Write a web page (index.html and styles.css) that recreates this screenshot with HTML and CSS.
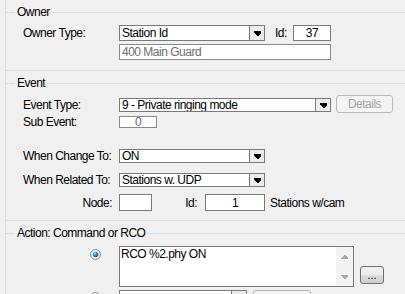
FILE: index.html
```html
<!DOCTYPE html>
<html>
<head>
<meta charset="utf-8">
<link rel="stylesheet" href="styles.css">
</head>
<body>
<div class="panel">
  <fieldset class="grp grp-owner">
    <legend>Owner</legend>
    <div class="row r-o1">
      <span class="lbl">Owner Type:</span>
      <div class="combo w146 h16"><span class="val">Station Id</span><span class="dd"><svg width="7" height="5" viewBox="0 0 7 5"><path d="M0 0h7v2l-3 3h-1l-3-3z"/></svg></span></div>
      <span class="idlbl">Id:</span>
      <div class="input w38 h16 center">37</div>
    </div>
    <div class="row r-o2">
      <span class="lbl"></span>
      <div class="input dis w212 h16">400 Main Guard</div>
    </div>
  </fieldset>

  <fieldset class="grp grp-event">
    <legend>Event</legend>
    <div class="row r-e1">
      <span class="lbl">Event Type:</span>
      <div class="combo w212 h14 top3"><span class="val">9 - Private ringing mode</span><span class="dd"><svg width="7" height="5" viewBox="0 0 7 5"><path d="M0 0h7v2l-3 3h-1l-3-3z"/></svg></span></div>
      <div class="btn dis-btn">Details</div>
    </div>
    <div class="row r-e2">
      <span class="lbl">Sub Event:</span>
      <div class="input dis w38 h12 center">0</div>
    </div>
    <div class="row r-e3">
      <span class="lbl">When Change To:</span>
      <div class="combo w146 h14"><span class="val">ON</span><span class="dd"><svg width="7" height="5" viewBox="0 0 7 5"><path d="M0 0h7v2l-3 3h-1l-3-3z"/></svg></span></div>
    </div>
    <div class="row r-e4">
      <span class="lbl">When Related To:</span>
      <div class="combo w146 h14"><span class="val">Stations w. UDP</span><span class="dd"><svg width="7" height="5" viewBox="0 0 7 5"><path d="M0 0h7v2l-3 3h-1l-3-3z"/></svg></span></div>
    </div>
    <div class="row r-e5">
      <span class="lbl right">Node:</span>
      <div class="input w33 h17"></div>
      <span class="idlbl2">Id:</span>
      <div class="input w60 h17 center">1</div>
      <span class="note">Stations w/cam</span>
    </div>
  </fieldset>

  <fieldset class="grp grp-action">
    <legend>Action: Command or RCO</legend>
    <div class="row r-a1">
      <span class="lbl radio-cell">
        <svg class="radio" width="11" height="11" viewBox="0 0 11 11">
          <defs>
            <radialGradient id="rg" cx="40%" cy="35%" r="70%">
              <stop offset="0" stop-color="#9fe0ff"/>
              <stop offset="0.5" stop-color="#1f8ad6"/>
              <stop offset="1" stop-color="#0b4f8a"/>
            </radialGradient>
          </defs>
          <circle cx="5.5" cy="5.5" r="5" fill="#e4e4e4" stroke="#8f8f8f" stroke-width="1"/>
          <circle cx="5.5" cy="5.5" r="3.7" fill="#f7f7f7"/>
          <circle cx="5.5" cy="5.5" r="2.8" fill="url(#rg)"/>
        </svg>
      </span>
      <div class="memo">
        <div class="memo-text">RCO %2.phy ON</div>
        <div class="vscroll">
          <svg width="7" height="4" viewBox="0 0 7 4"><path d="M3 0h1l3 3v1h-7v-1z" fill="#a8a8a8"/></svg>
          <svg width="7" height="4" viewBox="0 0 7 4"><path d="M0 0h7v1l-3 3h-1l-3-3z" fill="#a8a8a8"/></svg>
        </div>
      </div>
      <div class="btn small-btn">...</div>
    </div>
    <div class="row r-a2">
      <span class="lbl radio-cell">
        <svg class="radio" width="11" height="11" viewBox="0 0 11 11">
          <circle cx="5.5" cy="5.5" r="5" fill="#ececec" stroke="#9a9a9a" stroke-width="1"/>
        </svg>
      </span>
      <div class="combo w128 h16"><span class="val"></span><span class="dd"></span></div>
      <div class="btn plain-btn"></div>
    </div>
  </fieldset>
</div>
</body>
</html>
```

FILE: styles.css
```css
* { box-sizing: border-box; }
html, body {
  margin: 0;
  padding: 0;
  background: #f0f0f0;
  width: 405px;
  height: 294px;
  overflow: hidden;
}
body {
  font-family: "Liberation Sans", Arial, sans-serif;
  font-size: 12px;
  letter-spacing: -0.5px;
  color: #000;
  line-height: 14px;
}
.panel {
  margin-left: 5px;
  border-left: 1px solid #d9e1e6;
  height: 294px;
  overflow: hidden;
}
.grp {
  margin: 0;
  padding: 0 0 0 17px;
  border: 1px solid #d5dfe5;
  border-left: none;
  border-right: none;
  min-width: 0;
}
.grp legend {
  margin-left: -8px;
  padding: 0 2px;
  line-height: 14px;
  height: 14px;
}
.grp-owner { margin-top: 5px; padding-bottom: 10px; }
.grp-event { margin-top: 5px; padding-bottom: 9px; }
.grp-action { margin-top: 5px; padding-bottom: 0; border-bottom: none; }

.row { display: flex; align-items: center; }
.lbl { width: 96px; flex: none; white-space: nowrap; }
.lbl.right { text-align: right; padding-right: 7px; }

.r-o1 { margin-top: 6px; height: 16px; }
.r-o2 { margin-top: 3px; height: 16px; }
.r-e1 { margin-top: 5px; height: 18px; align-items: flex-start; }
.r-e1 .lbl { margin-top: 3px; }
.r-e2 { margin-top: 2px; height: 14px; }
.r-e3 { margin-top: 20px; height: 14px; }
.r-e4 { margin-top: 10px; height: 14px; }
.r-e5 { margin-top: 7px; height: 17px; }
.r-a1 { margin-top: 6px; height: 41px; align-items: flex-start; }
.r-a2 { margin-top: 3px; height: 20px; align-items: flex-start; }

.combo, .input {
  border: 1px solid #7a7a7a;
  background: #fff;
  display: flex;
  align-items: center;
  flex: none;
  overflow: hidden;
  white-space: nowrap;
}
.combo .val { flex: 1; padding-left: 2px; }
.combo .dd {
  width: 15px;
  align-self: stretch;
  border-left: 1px solid #7a7a7a;
  background: #ececec;
  display: flex;
  align-items: center;
  justify-content: center;
}
.combo .dd svg { shape-rendering: crispEdges; fill: #000; }
.input { padding-left: 2px; }
.input.center { justify-content: center; padding-left: 0; }
.input.dis { color: #6d6d6d; border-color: #8a8a8a; }

.w33 { width: 33px; }
.w38 { width: 38px; }
.w60 { width: 60px; }
.w128 { width: 128px; }
.w146 { width: 146px; }
.w212 { width: 212px; }
.h12 { height: 12px; }
.h14 { height: 14px; }
.h16 { height: 16px; }
.h17 { height: 17px; }
.top3 { margin-top: 3px; }

.idlbl { width: 28px; padding-left: 10px; flex: none; }
.idlbl2 { width: 53px; text-align: right; padding-right: 8px; flex: none; }
.note { margin-left: 5px; white-space: nowrap; }

.btn {
  flex: none;
  display: flex;
  align-items: center;
  justify-content: center;
  border-radius: 3px;
}
.dis-btn {
  margin-left: 5px;
  width: 57px;
  height: 18px;
  border: 1px solid #b5b9bc;
  background: #f4f4f4;
  color: #a3a3a3;
}
.small-btn {
  margin-left: 6px;
  margin-top: 20px;
  width: 24px;
  height: 18px;
  border: 1px solid #707070;
  background: linear-gradient(#f2f2f2 0%, #ebebeb 50%, #dddddd 51%, #cfcfcf 100%);
  align-items: flex-end;
  line-height: 12px;
  padding-bottom: 2px;
  font-size: 11px;
  letter-spacing: 0;
}
.plain-btn {
  margin-left: 6px;
  width: 58px;
  height: 20px;
  border: 1px solid #adb2b5;
  background: #f4f4f4;
}

.radio-cell { display: flex; justify-content: flex-start; }
.radio { margin-left: 67px; margin-top: 3px; }
.r-a2 .radio { margin-top: 2px; }

.memo {
  flex: none;
  width: 235px;
  height: 41px;
  border: 1px solid #7a7a7a;
  background: #fff;
  display: flex;
}
.memo-text { flex: 1; padding-left: 1px; padding-top: 0; }
.vscroll {
  width: 17px;
  background: #f3f3f3;
  display: flex;
  flex-direction: column;
  justify-content: space-between;
  align-items: center;
  padding: 8px 0 7px;
}
.vscroll svg { shape-rendering: crispEdges; }
```
